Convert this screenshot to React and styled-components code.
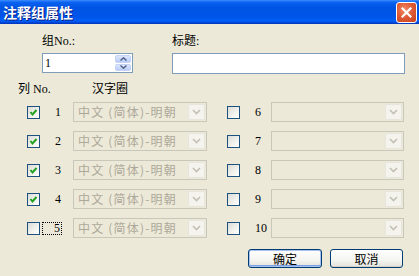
import React from "react";
import styled, { createGlobalStyle } from "styled-components";

const Global = createGlobalStyle`
  html, body { margin: 0; padding: 0; background: #ECE9D8; }
  body {
    font-family: "Liberation Serif", "Noto Sans CJK SC", serif;
    font-size: 12px;
    color: #000;
  }
`;

const Window = styled.div`
  width: 419px;
  height: 276px;
  background: #ECE9D8;
  display: flex;
  flex-direction: column;
  overflow: hidden;
`;

const TitleBar = styled.div`
  height: 24px;
  flex: none;
  display: flex;
  align-items: center;
  justify-content: space-between;
  padding: 0 2px 0 3px;
  background: linear-gradient(
    #3C8CFF 0%,
    #0A63F0 10%,
    #0054E3 30%,
    #0053E8 70%,
    #0060F8 88%,
    #0046D6 94%,
    #0033B8 100%
  );
`;

const Title = styled.span`
  font-family: "Noto Sans CJK SC", sans-serif;
  font-weight: 700;
  font-size: 14px;
  line-height: 16px;
  color: #fff;
  text-shadow: 1px 1px 0 #0A1E80;
`;

const CloseButton = styled.div`
  width: 19px;
  height: 19px;
  border: 1px solid #fff;
  border-radius: 3px;
  background: radial-gradient(circle at 40% 35%, #F08A68 0%, #E05B37 45%, #C8401C 100%);
  display: flex;
  align-items: center;
  justify-content: center;
`;

const Content = styled.div`
  display: flex;
  flex-direction: column;
  flex: 1;
`;

const TopRow = styled.div`
  display: flex;
  gap: 39px;
  padding: 10px 0 0 42px;
`;

const Field = styled.div`
  display: flex;
  flex-direction: column;
  gap: 5px;
  width: ${(p) => p.$w}px;
`;

const Label = styled.span`
  line-height: 14px;
  height: 14px;
`;

const TextBox = styled.div`
  box-sizing: border-box;
  height: ${(p) => p.$h}px;
  border: 1px solid #7F9DB9;
  background: #fff;
  display: flex;
  align-items: stretch;
`;

const TextValue = styled.span`
  flex: 1;
  padding-left: 2px;
  line-height: 18px;
`;

const Spinner = styled.div`
  width: 16px;
  display: flex;
  flex-direction: column;
  gap: 1px;
  padding: 1px 1px 1px 0;
`;

const SpinBtn = styled.div`
  flex: 1;
  border-radius: 2px;
  background: linear-gradient(#DCE6FC, #B9CCF7);
  border: 1px solid #C4D3F6;
  display: flex;
  align-items: center;
  justify-content: center;
`;

const HeaderRow = styled.div`
  display: grid;
  grid-template-columns: 74px auto;
  padding-left: 18px;
  margin-top: 8px;
  line-height: 14px;
`;

const Rows = styled.div`
  display: grid;
  grid-template-columns: 180px 177px;
  grid-template-rows: repeat(5, 20px);
  grid-auto-flow: column;
  column-gap: 20px;
  row-gap: 9px;
  padding-left: 27px;
  margin-top: 6px;
`;

const Row = styled.div`
  display: flex;
  align-items: center;
`;

const Box = styled.div`
  box-sizing: border-box;
  width: 13px;
  height: 13px;
  flex: none;
  border: 1px solid #1C5180;
  background: linear-gradient(135deg, #DCDCD7 0%, #F2F2EE 60%, #FFFFFF 100%);
  display: flex;
  align-items: center;
  justify-content: center;
`;

const Num = styled.span`
  margin-left: 15px;
  line-height: 14px;
`;

const FocusNum = styled.span`
  margin-left: 3px;
  padding: 0 1px 0 11px;
  outline: 1px dotted #000;
  line-height: 11px;
  height: 11px;
  display: inline-flex;
  align-items: center;
`;

const Combo = styled.div`
  box-sizing: border-box;
  margin-left: auto;
  width: ${(p) => p.$w}px;
  height: 20px;
  border: 1px solid #C9C7BA;
  background: #ECE9D8;
  display: flex;
  align-items: stretch;
`;

const ComboText = styled.span`
  flex: 1;
  padding-left: 4px;
  line-height: 18px;
  color: #ACA899;
  font-family: "Noto Sans CJK SC", sans-serif;
  letter-spacing: 1.2px;
  white-space: nowrap;
  overflow: hidden;
`;

const ComboBtn = styled.div`
  box-sizing: border-box;
  width: 17px;
  margin: 1px;
  background: #F4F3EE;
  border: 1px solid #E8E6DC;
  border-radius: 1px;
  display: flex;
  align-items: center;
  justify-content: center;
`;

const ButtonRow = styled.div`
  display: flex;
  justify-content: flex-end;
  gap: 8px;
  padding-right: 16px;
  margin-top: 11px;
`;

const Button = styled.div`
  box-sizing: border-box;
  width: ${(p) => p.$w}px;
  height: 19px;
  border: 1px solid #003C74;
  border-radius: 3px;
  background: linear-gradient(#FFFFFF 0%, #F4F4F0 60%, #E3E2DA 100%);
  box-shadow: ${(p) => (p.$default ? "inset 0 0 0 1px #A8C2F0, inset 0 -1px 0 1px #7CA0E4" : "inset 0 -1px 0 #D6D0C5")};
  display: flex;
  align-items: center;
  justify-content: center;
  font-family: "Noto Sans CJK SC", sans-serif;
  font-size: 12px;
  line-height: 14px;
`;

const Check = () => (
  <svg width="9" height="9" viewBox="0 0 9 9">
    <polyline points="1.5,4 3.5,6.5 7.5,2" fill="none" stroke="#21A121" strokeWidth="2" />
  </svg>
);

const Chevron = ({ color = "#C2C0B4" }) => (
  <svg width="9" height="6" viewBox="0 0 9 6">
    <polyline points="1,1 4.5,4.5 8,1" fill="none" stroke={color} strokeWidth="1.6" />
  </svg>
);

const SpinArrow = ({ up }) => (
  <svg width="7" height="4" viewBox="0 0 7 4">
    <polyline points={up ? "0.5,3.5 3.5,0.8 6.5,3.5" : "0.5,0.5 3.5,3.2 6.5,0.5"} fill="none" stroke="#4D6185" strokeWidth="1.4" />
  </svg>
);

const leftRows = [1, 2, 3, 4, 5];
const rightRows = [6, 7, 8, 9, 10];

export default function App() {
  return (
    <Window>
      <Global />
      <TitleBar>
        <Title>注释组属性</Title>
        <CloseButton>
          <svg width="11" height="11" viewBox="0 0 11 11">
            <path d="M1.5 1.5 L9.5 9.5 M9.5 1.5 L1.5 9.5" stroke="#fff" strokeWidth="2.2" strokeLinecap="square" />
          </svg>
        </CloseButton>
      </TitleBar>
      <Content>
        <TopRow>
          <Field $w={91}>
            <Label>组No.:</Label>
            <TextBox $h={20}>
              <TextValue>1</TextValue>
              <Spinner>
                <SpinBtn><SpinArrow up /></SpinBtn>
                <SpinBtn><SpinArrow /></SpinBtn>
              </Spinner>
            </TextBox>
          </Field>
          <Field $w={233}>
            <Label>标题:</Label>
            <TextBox $h={21} />
          </Field>
        </TopRow>
        <HeaderRow>
          <span>列 No.</span>
          <span>汉字圈</span>
        </HeaderRow>
        <Rows>
          {leftRows.map((n) => (
            <Row key={n}>
              <Box>{n < 5 && <Check />}</Box>
              {n === 5 ? <FocusNum>{n}</FocusNum> : <Num>{n}</Num>}
              <Combo $w={134}>
                <ComboText>中文 (简体)-明朝</ComboText>
                <ComboBtn><Chevron /></ComboBtn>
              </Combo>
            </Row>
          ))}
          {rightRows.map((n) => (
            <Row key={n}>
              <Box />
              <Num>{n}</Num>
              <Combo $w={133}>
                <ComboText />
                <ComboBtn><Chevron /></ComboBtn>
              </Combo>
            </Row>
          ))}
        </Rows>
        <ButtonRow>
          <Button $w={74} $default>确定</Button>
          <Button $w={73}>取消</Button>
        </ButtonRow>
      </Content>
    </Window>
  );
}
